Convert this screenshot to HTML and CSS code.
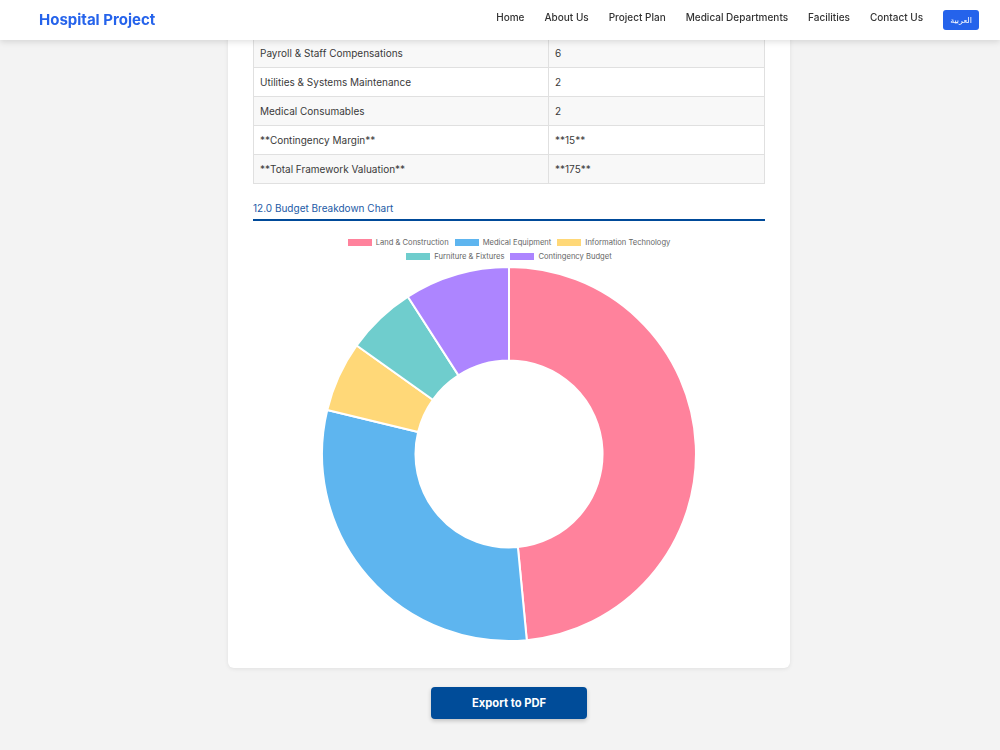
FILE: index.html
```html
<!DOCTYPE html>
<html lang="en">
<head>
<meta charset="utf-8">
<title>Hospital Project – Budget</title>
<link rel="stylesheet" href="styles.css">
</head>
<body>
<header class="site-header">
  <a class="brand" href="#">Hospital Project</a>
  <nav class="main-nav">
    <a href="#">Home</a>
    <a href="#">About Us</a>
    <a href="#">Project Plan</a>
    <a href="#">Medical Departments</a>
    <a href="#">Facilities</a>
    <a href="#">Contact Us</a>
    <button class="lang-btn" type="button" lang="ar">العربية</button>
  </nav>
</header>

<main class="page">
  <section class="card">
    <table class="budget">
      <tbody>
        <tr><td class="label">Payroll &amp; Staff Compensations</td><td>6</td></tr>
        <tr><td class="label">Utilities &amp; Systems Maintenance</td><td>2</td></tr>
        <tr><td class="label">Medical Consumables</td><td>2</td></tr>
        <tr><td class="label">**Contingency Margin**</td><td>**15**</td></tr>
        <tr><td class="label">**Total Framework Valuation**</td><td>**175**</td></tr>
      </tbody>
    </table>

    <h3 class="section-title">12.0 Budget Breakdown Chart</h3>

    <div class="chart">
      <div class="legend">
        <div class="legend-row">
          <span class="legend-item"><i class="swatch land"></i>Land &amp; Construction</span>
          <span class="legend-item"><i class="swatch equip"></i>Medical Equipment</span>
          <span class="legend-item"><i class="swatch it"></i>Information Technology</span>
        </div>
        <div class="legend-row">
          <span class="legend-item"><i class="swatch furn"></i>Furniture &amp; Fixtures</span>
          <span class="legend-item"><i class="swatch cont"></i>Contingency Budget</span>
        </div>
      </div>
      <!-- doughnut: 80 / 50 / 10 / 10 / 15, drawn clockwise from 12 o'clock, 50% cutout -->
      <svg class="donut" width="380" height="380" viewBox="-190 -190 380 380" aria-label="Budget breakdown">
        <g stroke="#fff" stroke-width="2" stroke-linejoin="round">
          <path class="seg-land" d="M0 -187 A187 187 0 0 1 17.78 186.15 L8.89 93.08 A93.5 93.5 0 0 0 0 -93.5 Z"/>
          <path class="seg-equip" d="M17.78 186.15 A187 187 0 0 1 -181.73 -44.09 L-90.86 -22.04 A93.5 93.5 0 0 0 8.89 93.08 Z"/>
          <path class="seg-it" d="M-181.73 -44.09 A187 187 0 0 1 -152.33 -108.47 L-76.16 -54.23 A93.5 93.5 0 0 0 -90.86 -22.04 Z"/>
          <path class="seg-furn" d="M-152.33 -108.47 A187 187 0 0 1 -101.10 -157.31 L-50.55 -78.66 A93.5 93.5 0 0 0 -76.16 -54.23 Z"/>
          <path class="seg-cont" d="M-101.10 -157.31 A187 187 0 0 1 0 -187 L0 -93.5 A93.5 93.5 0 0 0 -50.55 -78.66 Z"/>
        </g>
      </svg>
    </div>
  </section>

  <div class="actions">
    <button class="export-btn" type="button">Export to PDF</button>
  </div>
</main>
</body>
</html>
```

FILE: styles.css
```css
* { box-sizing: border-box; }

html, body {
  margin: 0;
  padding: 0;
}

body {
  background: #f3f3f3;
  font-family: Inter, "DejaVu Sans", sans-serif;
  color: #333;
}

/* ---------- top bar ---------- */
.site-header {
  position: fixed;
  top: 0;
  left: 0;
  right: 0;
  height: 40px;
  z-index: 10;
  display: flex;
  align-items: center;
  justify-content: space-between;
  padding: 0 21px 0 39px;
  background: #fff;
  box-shadow: 0 2px 6px rgba(0, 0, 0, 0.12);
}

.brand {
  font-size: 15px;
  font-weight: 700;
  color: #2563eb;
  text-decoration: none;
  margin-top: -1px;
}

.main-nav {
  display: flex;
  align-items: center;
  gap: 20px;
  margin-top: -2px;
}

.main-nav a {
  font-size: 10px;
  font-weight: 500;
  color: #333;
  text-decoration: none;
  margin-bottom: 4px;
}

.lang-btn {
  height: 20px;
  padding: 0 7px;
  border: none;
  border-radius: 3px;
  background: #2563eb;
  color: #fff;
  font-family: "DejaVu Sans", sans-serif;
  font-size: 8px;
  margin-top: 2px;
}

/* ---------- content ---------- */
.page {
  padding-left: 18px;
  padding-bottom: 40px;
}

.card {
  width: 562px;
  margin: 0 auto;
  padding: 38px 25px 24px;
  background: #fff;
  border-radius: 0 0 6px 6px;
  box-shadow: 0 1px 4px rgba(0, 0, 0, 0.08);
}

.budget {
  width: 100%;
  border-collapse: collapse;
  font-size: 10px;
  line-height: 14px;
  color: #3a3a3a;
}

.budget td {
  border: 1px solid #e0e0e0;
  padding: 7px 6px;
}

.budget td.label { width: 295px; }

.budget tr:nth-child(odd) td { background: #f8f8f8; }

.section-title {
  margin: 17px 0 0;
  padding-bottom: 4px;
  border-bottom: 2px solid #004a99;
  font-size: 10px;
  line-height: 14px;
  font-weight: 400;
  color: #1c5aa6;
}

/* ---------- chart ---------- */
.chart {
  display: flex;
  flex-direction: column;
  align-items: center;
  padding-top: 16px;
}

.legend {
  display: flex;
  flex-direction: column;
  align-items: center;
  gap: 4px;
}

.legend-row {
  display: flex;
  gap: 6px;
}

.legend-item {
  display: flex;
  align-items: center;
  gap: 4px;
  height: 10px;
  font-size: 7.6px;
  color: #666;
}

.swatch {
  display: block;
  width: 24px;
  height: 7px;
}

.swatch.land, .seg-land { background: #ff829c; fill: #ff829c; }
.swatch.equip, .seg-equip { background: #5eb5ef; fill: #5eb5ef; }
.swatch.it, .seg-it { background: #ffd878; fill: #ffd878; }
.swatch.furn, .seg-furn { background: #6fcdcd; fill: #6fcdcd; }
.swatch.cont, .seg-cont { background: #ad85ff; fill: #ad85ff; }

.donut {
  display: block;
  margin-top: 3px;
}

/* ---------- actions ---------- */
.actions {
  display: flex;
  justify-content: center;
  margin-top: 19px;
}

.export-btn {
  width: 156px;
  height: 32px;
  border: none;
  border-radius: 4px;
  background: #004c99;
  color: #fff;
  font-family: Inter, sans-serif;
  font-size: 11.2px;
  font-weight: 700;
  box-shadow: 0 2px 4px rgba(0, 0, 0, 0.2);
}
```
